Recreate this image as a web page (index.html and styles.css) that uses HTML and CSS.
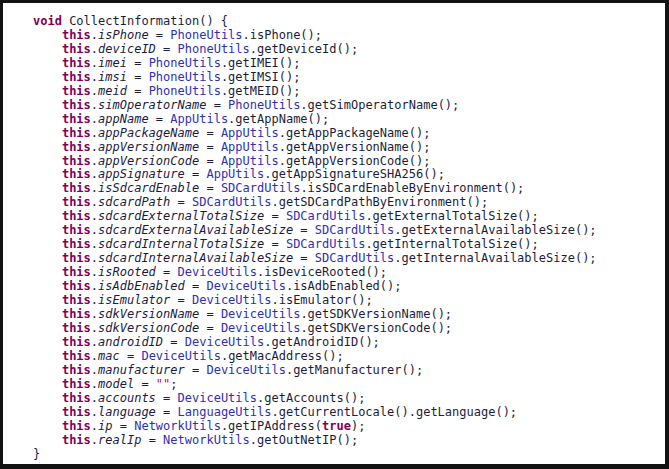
FILE: index.html
```html
<!DOCTYPE html>
<html>
<head>
<meta charset="utf-8">
<link rel="stylesheet" href="styles.css">
</head>
<body>
<div class="frame">
<pre class="code"><span class="kw">void</span> CollectInformation() {
    <span class="kw">this</span>.<span class="fd">isPhone</span> = <span class="cl">PhoneUtils</span>.isPhone();
    <span class="kw">this</span>.<span class="fd">deviceID</span> = <span class="cl">PhoneUtils</span>.getDeviceId();
    <span class="kw">this</span>.<span class="fd">imei</span> = <span class="cl">PhoneUtils</span>.getIMEI();
    <span class="kw">this</span>.<span class="fd">imsi</span> = <span class="cl">PhoneUtils</span>.getIMSI();
    <span class="kw">this</span>.<span class="fd">meid</span> = <span class="cl">PhoneUtils</span>.getMEID();
    <span class="kw">this</span>.<span class="fd">simOperatorName</span> = <span class="cl">PhoneUtils</span>.getSimOperatorName();
    <span class="kw">this</span>.<span class="fd">appName</span> = <span class="cl">AppUtils</span>.getAppName();
    <span class="kw">this</span>.<span class="fd">appPackageName</span> = <span class="cl">AppUtils</span>.getAppPackageName();
    <span class="kw">this</span>.<span class="fd">appVersionName</span> = <span class="cl">AppUtils</span>.getAppVersionName();
    <span class="kw">this</span>.<span class="fd">appVersionCode</span> = <span class="cl">AppUtils</span>.getAppVersionCode();
    <span class="kw">this</span>.<span class="fd">appSignature</span> = <span class="cl">AppUtils</span>.getAppSignatureSHA256();
    <span class="kw">this</span>.<span class="fd">isSdcardEnable</span> = <span class="cl">SDCardUtils</span>.isSDCardEnableByEnvironment();
    <span class="kw">this</span>.<span class="fd">sdcardPath</span> = <span class="cl">SDCardUtils</span>.getSDCardPathByEnvironment();
    <span class="kw">this</span>.<span class="fd">sdcardExternalTotalSize</span> = <span class="cl">SDCardUtils</span>.getExternalTotalSize();
    <span class="kw">this</span>.<span class="fd">sdcardExternalAvailableSize</span> = <span class="cl">SDCardUtils</span>.getExternalAvailableSize();
    <span class="kw">this</span>.<span class="fd">sdcardInternalTotalSize</span> = <span class="cl">SDCardUtils</span>.getInternalTotalSize();
    <span class="kw">this</span>.<span class="fd">sdcardInternalAvailableSize</span> = <span class="cl">SDCardUtils</span>.getInternalAvailableSize();
    <span class="kw">this</span>.<span class="fd">isRooted</span> = <span class="cl">DeviceUtils</span>.isDeviceRooted();
    <span class="kw">this</span>.<span class="fd">isAdbEnabled</span> = <span class="cl">DeviceUtils</span>.isAdbEnabled();
    <span class="kw">this</span>.<span class="fd">isEmulator</span> = <span class="cl">DeviceUtils</span>.isEmulator();
    <span class="kw">this</span>.<span class="fd">sdkVersionName</span> = <span class="cl">DeviceUtils</span>.getSDKVersionName();
    <span class="kw">this</span>.<span class="fd">sdkVersionCode</span> = <span class="cl">DeviceUtils</span>.getSDKVersionCode();
    <span class="kw">this</span>.<span class="fd">androidID</span> = <span class="cl">DeviceUtils</span>.getAndroidID();
    <span class="kw">this</span>.<span class="fd">mac</span> = <span class="cl">DeviceUtils</span>.getMacAddress();
    <span class="kw">this</span>.<span class="fd">manufacturer</span> = <span class="cl">DeviceUtils</span>.getManufacturer();
    <span class="kw">this</span>.<span class="fd">model</span> = <span class="str">""</span>;
    <span class="kw">this</span>.<span class="fd">accounts</span> = <span class="cl">DeviceUtils</span>.getAccounts();
    <span class="kw">this</span>.<span class="fd">language</span> = <span class="cl">LanguageUtils</span>.getCurrentLocale().getLanguage();
    <span class="kw">this</span>.<span class="fd">ip</span> = <span class="cl">NetworkUtils</span>.getIPAddress(<span class="kw">true</span>);
    <span class="kw">this</span>.<span class="fd">realIp</span> = <span class="cl">NetworkUtils</span>.getOutNetIP();
}</pre>
</div>
</body>
</html>
```
FILE: styles.css
```css
html, body {
  margin: 0;
  padding: 0;
  background: #111;
}
.frame {
  width: 669px;
  height: 469px;
  box-sizing: border-box;
  border-style: solid;
  border-color: #121212;
  border-width: 3px 4px 5px 3px;
  background: #fff;
  padding: 12px 0 0 30px;
  overflow: hidden;
}
.code {
  margin: 0;
  font-family: "DejaVu Sans Mono", monospace;
  font-size: 12px;
  line-height: 13.95px;
  color: #1c1c3a;
}
.kw {
  color: #7f0055;
  font-weight: bold;
}
.fd {
  font-style: italic;
  color: #1a1a40;
}
.cl {
  color: #2f2fb0;
}
.str {
  color: #d0006f;
}
```
